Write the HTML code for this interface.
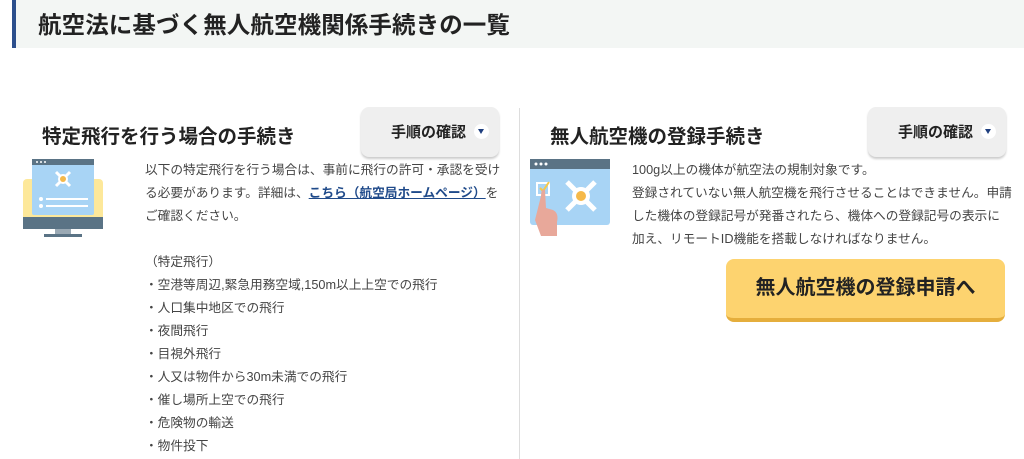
<!DOCTYPE html>
<html><head><meta charset="utf-8"><style>
*{margin:0;padding:0;box-sizing:border-box}
body{width:1024px;height:459px;overflow:hidden;background:#fff;font-family:"Liberation Sans","Noto Sans CJK JP",sans-serif;color:#333;position:relative}
.hd{position:absolute;left:12px;top:0;width:1012px;height:48px;background:#f3f6f4;border-left:4px solid #2c4f8c}
.hd h1{position:absolute;left:22px;top:6px;font-size:23.5px;font-weight:bold;color:#222;letter-spacing:0.1px}
.t{position:absolute;font-size:19.5px;font-weight:bold;color:#222}
.btn{position:absolute;width:138px;height:50px;background:#efefef;border-radius:8px;box-shadow:0 2px 2px #ccc;font-size:15px;font-weight:bold;color:#222}
.btn span{position:absolute;left:30px;top:14px}
.btn i{position:absolute;right:10px;top:17px;width:15px;height:15px;background:#fff;border-radius:50%}
.btn i:after{content:"";position:absolute;left:4px;top:5px;border-left:3.5px solid transparent;border-right:3.5px solid transparent;border-top:5px solid #1f3f7f}
.p{position:absolute;font-size:12.7px;line-height:23px;color:#444;white-space:nowrap}
.p a{color:#1f4a8a;font-weight:bold;text-decoration:underline}
.vl{position:absolute;left:519px;top:108px;width:1px;height:351px;background:#ddd}
.yb{position:absolute;left:726px;top:259px;width:279px;height:63px;background:#fdd36f;border-radius:8px;border-bottom:4px solid #e5ae3c;font-size:20px;font-weight:bold;color:#222;text-align:center;line-height:58px}
</style></head><body>
<div class="hd"><h1>航空法に基づく無人航空機関係手続きの一覧</h1></div>
<div class="t" style="left:42px;top:120px">特定飛行を行う場合の手続き</div>
<div class="btn" style="left:361px;top:107px"><span>手順の確認</span><i></i></div>
<svg style="position:absolute;left:22px;top:157px" width="84" height="84">
<rect x="1" y="22" width="80" height="50" rx="4" fill="#fde89a"/>
<rect x="1" y="60" width="80" height="12" fill="#5a7385"/>
<rect x="33" y="72" width="16" height="6" fill="#9aa9b4"/>
<rect x="22" y="77" width="38" height="3" fill="#5a7385"/>
<rect x="10" y="2" width="62" height="56" rx="2" fill="#a8d4f5"/>
<rect x="10" y="2" width="62" height="6" fill="#5a7385"/>
<circle cx="15" cy="5" r="1" fill="#fff"/><circle cx="19" cy="5" r="1" fill="#fff"/><circle cx="23" cy="5" r="1" fill="#fff"/>
<path d="M34 15 L48 29 M48 15 L34 29" stroke="#fff" stroke-width="3"/>
<circle cx="41" cy="22" r="5" fill="#fff"/><circle cx="41" cy="22" r="3" fill="#f5b94a"/>
<circle cx="19" cy="42" r="2" fill="#fff"/><rect x="24" y="41" width="42" height="2" fill="#fff"/>
<circle cx="19" cy="49" r="2" fill="#fff"/><rect x="24" y="48" width="42" height="2" fill="#fff"/>
</svg>
<div class="p" style="left:145px;top:159px">以下の特定飛行を行う場合は、事前に飛行の許可・承認を受け<br>る必要があります。詳細は、<a>こちら（航空局ホームページ）</a>を<br>ご確認ください。</div>
<div class="p" style="left:145px;top:251px">（特定飛行）<br>・空港等周辺,緊急用務空域,150m以上上空での飛行<br>・人口集中地区での飛行<br>・夜間飛行<br>・目視外飛行<br>・人又は物件から30m未満での飛行<br>・催し場所上空での飛行<br>・危険物の輸送<br>・物件投下</div>
<div class="vl"></div>
<div class="t" style="left:550px;top:120px">無人航空機の登録手続き</div>
<div class="btn" style="left:868px;top:107px"><span>手順の確認</span><i></i></div>
<svg style="position:absolute;left:529px;top:158px" width="84" height="78">
<rect x="1" y="1" width="80" height="66" rx="3" fill="#a8d4f5"/>
<rect x="1" y="1" width="80" height="10" fill="#5a7385"/>
<circle cx="7" cy="6" r="1.5" fill="#fff"/><circle cx="12" cy="6" r="1.5" fill="#fff"/><circle cx="17" cy="6" r="1.5" fill="#fff"/>
<path d="M38 24 L66 52 M66 24 L38 52" stroke="#fff" stroke-width="5"/>
<circle cx="52" cy="38" r="9" fill="#fff"/><circle cx="52" cy="38" r="5" fill="#f5b94a"/>
<rect x="8" y="25" width="12" height="12" fill="none" stroke="#fff" stroke-width="2"/>
<path d="M11 30 L14 33 L20 24" stroke="#f5c94a" stroke-width="2" fill="none"/>
<path d="M12 38 Q12 30 16 32 L17 50 L24 52 Q30 55 28 64 L28 78 L12 78 L6 62 Z" fill="#e8a89a"/>
</svg>
<div class="p" style="left:632px;top:159px">100g以上の機体が航空法の規制対象です。<br>登録されていない無人航空機を飛行させることはできません。申請<br>した機体の登録記号が発番されたら、機体への登録記号の表示に<br>加え、リモートID機能を搭載しなければなりません。</div>
<div class="yb">無人航空機の登録申請へ</div>
</body></html>
